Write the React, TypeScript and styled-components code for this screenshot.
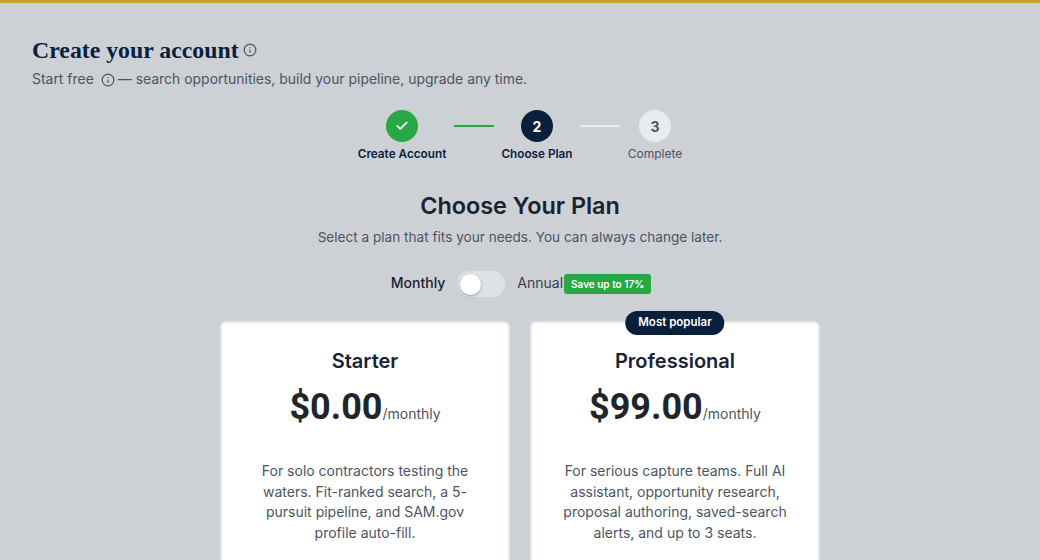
import { Check, Info } from "lucide-react";
import styled, { createGlobalStyle } from "styled-components";

const GlobalStyle = createGlobalStyle`
  html, body {
    margin: 0;
    padding: 0;
    height: 560px;
    overflow: hidden;
    background: #cdd0d5;
  }
  * { box-sizing: border-box; }
`;

const Page = styled.div`
  height: 560px;
  overflow: hidden;
  border-top: 3px solid #c9a227;
  padding: 34px 32px 0;
  font-family: Inter, "Liberation Sans", sans-serif;
  color: #0a1f3c;
`;

const Title = styled.h1`
  display: flex;
  align-items: center;
  gap: 4px;
  margin: 0;
  font-family: "Liberation Serif", serif;
  font-size: 23.8px;
  line-height: 26px;
  font-weight: 700;
  color: #0a1f3c;
`;

const Subtitle = styled.p`
  display: flex;
  align-items: center;
  margin: 6px 0 0;
  font-size: 13.95px;
  line-height: 20px;
  color: #4b5563;
`;

const InfoIcon = styled(Info)`
  flex: none;
  width: 14px;
  height: 14px;
  color: #4b5563;
`;

const InlineInfo = styled(InfoIcon)`
  margin: 2px 2.5px 0 7.5px;
`;

const Stepper = styled.div`
  display: flex;
  justify-content: center;
  align-items: flex-start;
  margin: 21px 0 0 0;
`;

const Step = styled.div<{ $w: number }>`
  display: flex;
  flex-direction: column;
  align-items: center;
  gap: 3px;
  width: ${({ $w }) => $w}px;
`;

const Dot = styled.div<{ $state: "done" | "active" | "todo" }>`
  display: flex;
  align-items: center;
  justify-content: center;
  width: 32px;
  height: 32px;
  border-radius: 50%;
  font-size: 14px;
  font-weight: 700;
  background: ${({ $state }) =>
    $state === "done" ? "#28a745" : $state === "active" ? "#0a1f3c" : "#e9ecef"};
  color: ${({ $state }) => ($state === "todo" ? "#4b5563" : "#fff")};
`;

const StepLabel = styled.span<{ $muted?: boolean }>`
  font-size: ${({ $muted }) => ($muted ? 12 : 11.75)}px;
  line-height: 18px;
  white-space: nowrap;
  font-weight: ${({ $muted }) => ($muted ? 400 : 600)};
  color: ${({ $muted }) => ($muted ? "#4b5563" : "#0a1f3c")};
`;

const Connector = styled.div<{ $done?: boolean }>`
  flex: none;
  width: 40px;
  height: 2px;
  margin: 15px 0 0;
  background: ${({ $done }) => ($done ? "#28a745" : "#e9ecef")};
`;

const Heading = styled.h2`
  margin: 27px 0 0;
  text-align: center;
  font-size: 23.4px;
  line-height: 32px;
  font-weight: 600;
  color: #1a2233;
`;

const Lead = styled.p`
  margin: 5px 0 0;
  text-align: center;
  font-size: 13.6px;
  line-height: 20px;
  color: #4b5563;
`;

const Billing = styled.div`
  display: flex;
  align-items: center;
  justify-content: center;
  margin: 24px 0 0;
  padding-left: 2px;
  font-size: 14px;
`;

const BillingLabel = styled.span<{ $on?: boolean }>`
  padding-bottom: 3px;
  font-weight: ${({ $on }) => ($on ? 500 : 400)};
  color: ${({ $on }) => ($on ? "#1a2233" : "#374151")};
`;

const Toggle = styled.div`
  display: flex;
  align-items: center;
  width: 48px;
  height: 26px;
  margin: 0 12px;
  padding: 0 1px;
  border-radius: 13px;
  background: #dfe2e7;
`;

const Knob = styled.div`
  width: 21px;
  height: 21px;
  margin-left: 2px;
  border-radius: 50%;
  background: #fff;
  box-shadow: 0 1px 3px rgba(0, 0, 0, 0.3);
`;

const SaveBadge = styled.span`
  margin-left: 1px;
  padding: 0 7px;
  height: 20px;
  line-height: 20px;
  border-radius: 3px;
  background: #28a745;
  color: #fff;
  font-size: 10px;
  font-weight: 600;
  white-space: nowrap;
`;

const Plans = styled.div`
  display: flex;
  justify-content: center;
  gap: 20px;
  margin: 24px 0 0;
`;

const Card = styled.div`
  position: relative;
  flex: none;
  width: 290px;
  height: 300px;
  padding: 26px 22px 0;
  border: 2px solid #e5e7eb;
  border-radius: 6px;
  background: #fff;
  text-align: center;
`;

const PopularBadge = styled.span`
  position: absolute;
  top: -12px;
  left: 50%;
  transform: translateX(-50%);
  padding: 0 13px;
  height: 24px;
  line-height: 22px;
  border-radius: 12px;
  background: #0a1f3c;
  color: #fff;
  font-size: 11.5px;
  font-weight: 600;
  white-space: nowrap;
`;

const PlanName = styled.h3`
  margin: 0;
  font-size: 20px;
  line-height: 24px;
  font-weight: 600;
  color: #1a2233;
`;

const Price = styled.div`
  display: flex;
  align-items: baseline;
  justify-content: center;
  margin: 12px 0 0;
`;

const Amount = styled.span`
  font-family: Roboto, Inter, sans-serif;
  font-size: 36px;
  line-height: 44px;
  font-weight: 700;
  color: #212529;
`;

const Period = styled.span`
  font-size: 14px;
  color: #4b5563;
`;

const Blurb = styled.p`
  margin: 32px 0 0;
  font-size: 14px;
  line-height: 20.6px;
  color: #4b5563;
`;

export default function App() {
  return (
    <Page>
      <GlobalStyle />
      <Title>
        Create your account <InfoIcon />
      </Title>
      <Subtitle>
        Start free <InlineInfo /> — search opportunities, build your pipeline, upgrade any time.
      </Subtitle>
      <Stepper>
        <Step $w={104}>
          <Dot $state="done">
            <Check size={14} strokeWidth={3} />
          </Dot>
          <StepLabel>Create Account</StepLabel>
        </Step>
        <Connector $done />
        <Step $w={86}>
          <Dot $state="active">2</Dot>
          <StepLabel>Choose Plan</StepLabel>
        </Step>
        <Connector />
        <Step $w={70}>
          <Dot $state="todo">3</Dot>
          <StepLabel $muted>Complete</StepLabel>
        </Step>
      </Stepper>
      <Heading>Choose Your Plan</Heading>
      <Lead>Select a plan that fits your needs. You can always change later.</Lead>
      <Billing>
        <BillingLabel $on>Monthly</BillingLabel>
        <Toggle>
          <Knob />
        </Toggle>
        <BillingLabel>Annual</BillingLabel>
        <SaveBadge>Save up to 17%</SaveBadge>
      </Billing>
      <Plans>
        <Card>
          <PlanName>Starter</PlanName>
          <Price>
            <Amount>$0.00</Amount>
            <Period>/monthly</Period>
          </Price>
          <Blurb>
            For solo contractors testing the waters. Fit-ranked search, a 5-pursuit pipeline, and
            SAM.gov profile auto-fill.
          </Blurb>
        </Card>
        <Card>
          <PopularBadge>Most popular</PopularBadge>
          <PlanName>Professional</PlanName>
          <Price>
            <Amount>$99.00</Amount>
            <Period>/monthly</Period>
          </Price>
          <Blurb>
            For serious capture teams. Full AI assistant, opportunity research, proposal
            authoring, saved-search alerts, and up to 3 seats.
          </Blurb>
        </Card>
      </Plans>
    </Page>
  );
}
